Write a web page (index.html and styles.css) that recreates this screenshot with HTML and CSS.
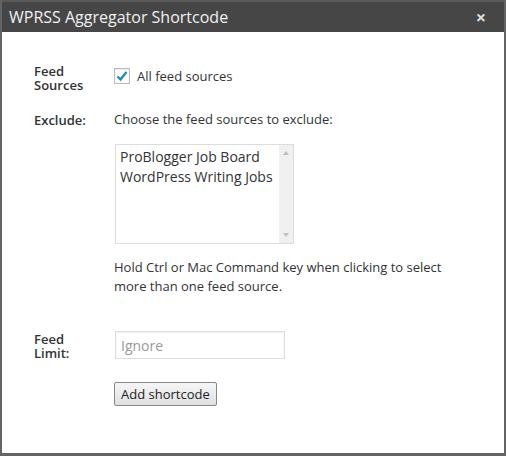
FILE: index.html
```html
<!DOCTYPE html>
<html lang="en">
<head>
    <meta charset="UTF-8">
    <title>WPRSS Aggregator Shortcode</title>
    <link rel="stylesheet" href="styles.css">
</head>
<body>
    <div class="dialog">
        <div class="titlebar">
            <span class="title">WPRSS Aggregator Shortcode</span>
            <span class="close">&times;</span>
        </div>
        <div class="content">
            <div class="row row-sources">
                <div class="label">Feed<br>Sources</div>
                <div class="field">
                    <label class="check">
                        <span class="box">
                            <svg width="14" height="14" viewBox="0 0 14 14"><path d="M2.5 7.5 L5.5 10.5 L11.5 3" fill="none" stroke="#1e8cbe" stroke-width="2.4"/></svg>
                        </span>
                        All feed sources
                    </label>
                </div>
            </div>
            <div class="row row-exclude">
                <div class="label">Exclude:</div>
                <div class="field">
                    <p class="intro">Choose the feed sources to exclude:</p>
                    <div class="select">
                        <div class="options">
                            <div>ProBlogger Job Board</div>
                            <div>WordPress Writing Jobs</div>
                        </div>
                        <div class="scroll">
                            <span class="arrow up"></span>
                            <span class="arrow down"></span>
                        </div>
                    </div>
                    <p class="help">Hold Ctrl or Mac Command key when clicking to select more than one feed source.</p>
                </div>
            </div>
            <div class="row row-limit">
                <div class="label">Feed<br>Limit:</div>
                <div class="field">
                    <input type="text" class="limit" placeholder="Ignore">
                </div>
            </div>
            <div class="row row-submit">
                <div class="label"></div>
                <div class="field">
                    <button class="add">Add shortcode</button>
                </div>
            </div>
        </div>
    </div>
</body>
</html>
```

FILE: styles.css
```css
html, body {
    margin: 0;
    padding: 0;
}
body {
    font-family: "Open Sans", sans-serif;
    color: #333;
    background-color: #666;
}
.dialog {
    width: 506px;
    height: 456px;
    box-sizing: border-box;
    border: 2px solid #646464;
    border-top: 0;
    border-bottom-width: 3px;
    background-color: #fff;
    display: flex;
    flex-direction: column;
}
.titlebar {
    height: 32px;
    background-color: #464646;
    border-top: 2px solid #5a5a5a;
    box-sizing: border-box;
    display: flex;
    align-items: center;
    justify-content: space-between;
    padding: 0 18px 0 7px;
}
.title {
    color: #f1f1f1;
    font-size: 16px;
}
.close {
    color: #ddd;
    font-size: 18px;
    font-weight: bold;
}
.content {
    padding: 30px 32px 0;
    font-size: 13px;
}
.row {
    display: flex;
}
.label {
    width: 80px;
    flex: none;
    font-weight: 600;
    line-height: 14px;
}
.field {
    flex: 1;
}
.row-sources .label {
    padding-top: 2px;
}
.check {
    display: flex;
    align-items: center;
    gap: 7px;
    height: 26px;
    padding-top: 2px;
    box-sizing: border-box;
}
.box {
    width: 14px;
    height: 14px;
    border: 1px solid #bbb;
    display: flex;
    align-items: center;
    justify-content: center;
    box-shadow: inset 0 1px 2px rgba(0, 0, 0, 0.1);
}
.row-exclude {
    margin-top: 17px;
}
.row-exclude .label {
    padding-top: 4px;
}
.intro {
    margin: 0;
    line-height: 20px;
}
.select {
    margin: 15px 0 0 1px;
    width: 177px;
    height: 98px;
    border: 1px solid #ddd;
    display: flex;
    font-size: 14px;
}
.options {
    flex: 1;
    padding: 2px 4px;
    line-height: 20px;
}
.scroll {
    width: 14px;
    background-color: #f0f0f0;
    display: flex;
    flex-direction: column;
    justify-content: space-between;
    align-items: center;
    padding: 6px 0;
}
.arrow {
    width: 0;
    height: 0;
    border-left: 3px solid transparent;
    border-right: 3px solid transparent;
}
.arrow.up {
    border-bottom: 4px solid #c0c0c0;
}
.arrow.down {
    border-top: 4px solid #c0c0c0;
}
.help {
    margin: 14px 0 0;
    line-height: 19px;
}
.row-limit {
    margin-top: 35px;
}
.row-limit .label {
    padding-top: 1px;
}
.limit {
    margin-left: 1px;
    width: 170px;
    height: 28px;
    box-sizing: border-box;
    border: 1px solid #ddd;
    padding: 3px 5px;
    font-family: "Open Sans", sans-serif;
    font-size: 14px;
    box-shadow: inset 0 1px 2px rgba(0, 0, 0, 0.07);
}
.limit::placeholder {
    color: #999;
}
.row-submit {
    margin-top: 22px;
}
.add {
    height: 24px;
    padding: 0 6px;
    font-family: "Open Sans", sans-serif;
    font-size: 13px;
    color: #222;
    border: 1px solid #888;
    border-radius: 2px;
    background: linear-gradient(#f6f6f6, #e0e0e0);
}
```
